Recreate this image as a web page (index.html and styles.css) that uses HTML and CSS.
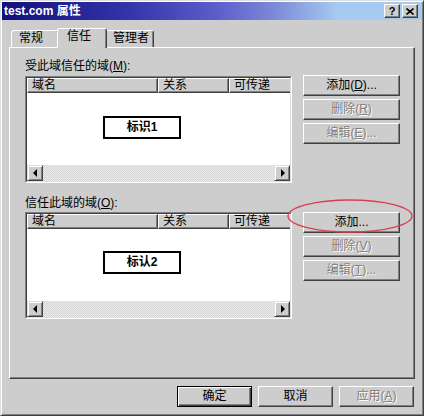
FILE: index.html
```html
<!DOCTYPE html>
<html lang="zh-CN">
<head>
<meta charset="utf-8">
<title>test.com 属性</title>
<link rel="stylesheet" href="styles.css">
</head>
<body>
<div class="window">
  <div class="titlebar">
    <span class="title">test.com 属性</span>
    <div class="caps">
      <span class="cap cap-help">?</span>
      <span class="cap"><svg width="8" height="7" viewBox="0 0 8 7"><path d="M0.5 0.5 L7.5 6.5 M7.5 0.5 L0.5 6.5" stroke="#000" stroke-width="1.6" fill="none"/></svg></span>
    </div>
  </div>
  <div class="tabs">
    <div class="tab tab-1">常规</div>
    <div class="tab tab-active">信任</div>
    <div class="tab tab-3">管理者</div>
  </div>
  <div class="panel">
    <section class="group">
      <div class="label">受此域信任的域(<u>M</u>):</div>
      <div class="group-row">
        <div class="lv"><div class="lv-in">
          <div class="lv-head"><div class="col c1">域名</div><div class="col c2">关系</div><div class="col c3">可传递</div></div>
          <div class="lv-body"><div class="tag">标识1</div></div>
          <div class="hscroll"><div class="sb-btn"><span class="arr-l"></span></div><div class="sb-track"></div><div class="sb-btn"><span class="arr-r"></span></div></div>
        </div></div>
        <div class="side side-first">
          <div class="btn">添加(<u>D</u>)...</div>
          <div class="btn disabled">删除(<u>R</u>)</div>
          <div class="btn disabled">编辑(<u>E</u>)...</div>
        </div>
      </div>
    </section>
    <section class="group group-second">
      <div class="label">信任此域的域(<u>O</u>):</div>
      <div class="group-row row-second">
        <div class="lv"><div class="lv-in">
          <div class="lv-head"><div class="col c1">域名</div><div class="col c2">关系</div><div class="col c3">可传递</div></div>
          <div class="lv-body body-second"><div class="tag">标认2</div></div>
          <div class="hscroll"><div class="sb-btn"><span class="arr-l"></span></div><div class="sb-track"></div><div class="sb-btn"><span class="arr-r"></span></div></div>
        </div></div>
        <div class="side">
          <div class="btn">添加...</div>
          <div class="btn disabled">删除(<u>V</u>)</div>
          <div class="btn disabled">编辑(<u>T</u>)...</div>
        </div>
      </div>
    </section>
  </div>
  <div class="footer">
    <div class="btn btn-wide btn-default">确定</div>
    <div class="btn btn-wide">取消</div>
    <div class="btn btn-wide disabled">应用(<u>A</u>)</div>
  </div>
  <svg class="mark" width="126" height="34" viewBox="0 0 126 34"><ellipse cx="63" cy="17" rx="62" ry="16" fill="none" stroke="#d8404c" stroke-width="1.3"/></svg>
</div>
</body>
</html>
```

FILE: styles.css
```css
body {
  margin: 0;
  background: #cdcdcd;
  font-family: "Liberation Sans", "Noto Sans CJK SC", sans-serif;
  font-size: 12px;
  color: #000;
}

.window {
  position: relative;
  width: 424px;
  height: 416px;
  box-sizing: border-box;
  border: 1px solid;
  border-color: #dfdfdf #404040 #404040 #dfdfdf;
  padding: 1px;
  box-shadow: inset 1px 1px #fff, inset -1px -1px #808080;
  background: #cdcdcd;
  display: flex;
  flex-direction: column;
}

.titlebar {
  height: 18px;
  flex: none;
  display: flex;
  align-items: center;
  justify-content: space-between;
  padding: 0 4px 0 2px;
  background: linear-gradient(90deg, #10107e 0%, #3434a8 30%, #5a5ac8 50%, #7c8ad8 65%, #a6caf0 80%, #a6caf0 100%);
}

.title {
  color: #fff;
  font-weight: bold;
  font-size: 12px;
  line-height: 18px;
  white-space: nowrap;
}

.caps {
  display: flex;
  gap: 2px;
}

.cap {
  width: 16px;
  height: 14px;
  box-sizing: border-box;
  background: #cdcdcd;
  border: 1px solid;
  border-color: #fff #404040 #404040 #fff;
  box-shadow: inset -1px -1px #808080;
  display: flex;
  align-items: center;
  justify-content: center;
}

.cap-help {
  font-family: "Liberation Sans", sans-serif;
  font-weight: bold;
  font-size: 11px;
  line-height: 12px;
}

.tabs {
  display: flex;
  align-items: flex-end;
  height: 19px;
  margin: 8px 7px 0;
  padding-left: 2px;
  flex: none;
}

.tab {
  box-sizing: border-box;
  height: 17px;
  padding-left: 7px;
  border: 1px solid;
  border-bottom: none;
  border-color: #fff #404040 transparent #fff;
  box-shadow: inset -1px 0 #808080;
  border-radius: 3px 3px 0 0;
  line-height: 14px;
  background: #cdcdcd;
  white-space: nowrap;
}

.tab-1 { width: 48px; }
.tab-3 { width: 49px; }

.tab-active {
  width: 50px;
  height: 20px;
  margin: 0 -2px -1px;
  padding-left: 9px;
  position: relative;
  z-index: 1;
}

.panel {
  flex: none;
  height: 332px;
  margin: 0 7px;
  box-sizing: border-box;
  border: 1px solid;
  border-color: #fff #404040 #404040 #fff;
  box-shadow: inset -1px -1px #808080;
  padding: 11px 0 0 15px;
}

.group-second { margin-top: 13px; }

.label {
  height: 14px;
  line-height: 14px;
  white-space: nowrap;
}

.group-row {
  display: flex;
  align-items: flex-start;
  margin-top: 3px;
}

.row-second { margin-top: 2px; }

.lv {
  width: 267px;
  height: 107px;
  box-sizing: border-box;
  border: 1px solid;
  border-color: #808080 #fff #fff #808080;
}

.lv-in {
  height: 100%;
  box-sizing: border-box;
  border: 1px solid;
  border-color: #404040 #dfdfdf #dfdfdf #404040;
  display: flex;
  flex-direction: column;
  background: #fff;
  overflow: hidden;
}

.lv-head {
  display: flex;
  height: 15px;
  flex: none;
  overflow: hidden;
}

.col {
  flex: none;
  box-sizing: border-box;
  height: 15px;
  border: 1px solid;
  border-color: #fff #404040 #404040 #fff;
  box-shadow: inset -1px -1px #808080;
  background: #cdcdcd;
  padding-left: 4px;
  line-height: 13px;
  white-space: nowrap;
}

.c1 { width: 131px; }
.c2 { width: 71px; }
.c3 { width: 80px; }

.lv-body {
  flex: 1;
  padding: 23px 0 0 76px;
}

.body-second { padding-top: 22px; }

.tag {
  width: 78px;
  height: 23px;
  box-sizing: border-box;
  border: 2px solid #000;
  font-weight: bold;
  text-align: center;
  line-height: 19px;
}

.hscroll {
  display: flex;
  height: 16px;
  flex: none;
}

.sb-btn {
  width: 16px;
  height: 16px;
  flex: none;
  box-sizing: border-box;
  border: 1px solid;
  border-color: #dfdfdf #404040 #404040 #dfdfdf;
  box-shadow: inset 1px 1px #fff, inset -1px -1px #808080;
  background: #cdcdcd;
  display: flex;
  align-items: center;
  justify-content: center;
}

.sb-track {
  flex: 1;
  background: repeating-conic-gradient(#ececec 0 25%, #d4d4d4 0 50%) 0 0 / 2px 2px;
}

.arr-l {
  width: 0;
  height: 0;
  border-top: 4px solid transparent;
  border-bottom: 4px solid transparent;
  border-right: 4px solid #000;
  margin-left: -1px;
}

.arr-r {
  width: 0;
  height: 0;
  border-top: 4px solid transparent;
  border-bottom: 4px solid transparent;
  border-left: 4px solid #000;
  margin-left: 1px;
}

.side {
  width: 97px;
  margin-left: 11px;
  display: flex;
  flex-direction: column;
  gap: 3px;
}

.side-first { margin-top: -1px; }

.btn {
  box-sizing: border-box;
  height: 21px;
  border: 1px solid;
  border-color: #fff #404040 #404040 #fff;
  box-shadow: inset -1px -1px #808080;
  background: #cdcdcd;
  text-align: center;
  line-height: 19px;
  white-space: nowrap;
}

.disabled {
  color: #808080;
  text-shadow: 1px 1px #fff;
}

.btn-default {
  border-color: #000;
  box-shadow: inset 1px 1px #fff, inset -1px -1px #404040, inset -2px -2px #808080;
}

.footer {
  flex: none;
  display: flex;
  justify-content: flex-end;
  gap: 6px;
  margin-top: 7px;
  padding-right: 8px;
}

.btn-wide { width: 75px; }

.mark {
  position: absolute;
  left: 286px;
  top: 198px;
  pointer-events: none;
}
```
